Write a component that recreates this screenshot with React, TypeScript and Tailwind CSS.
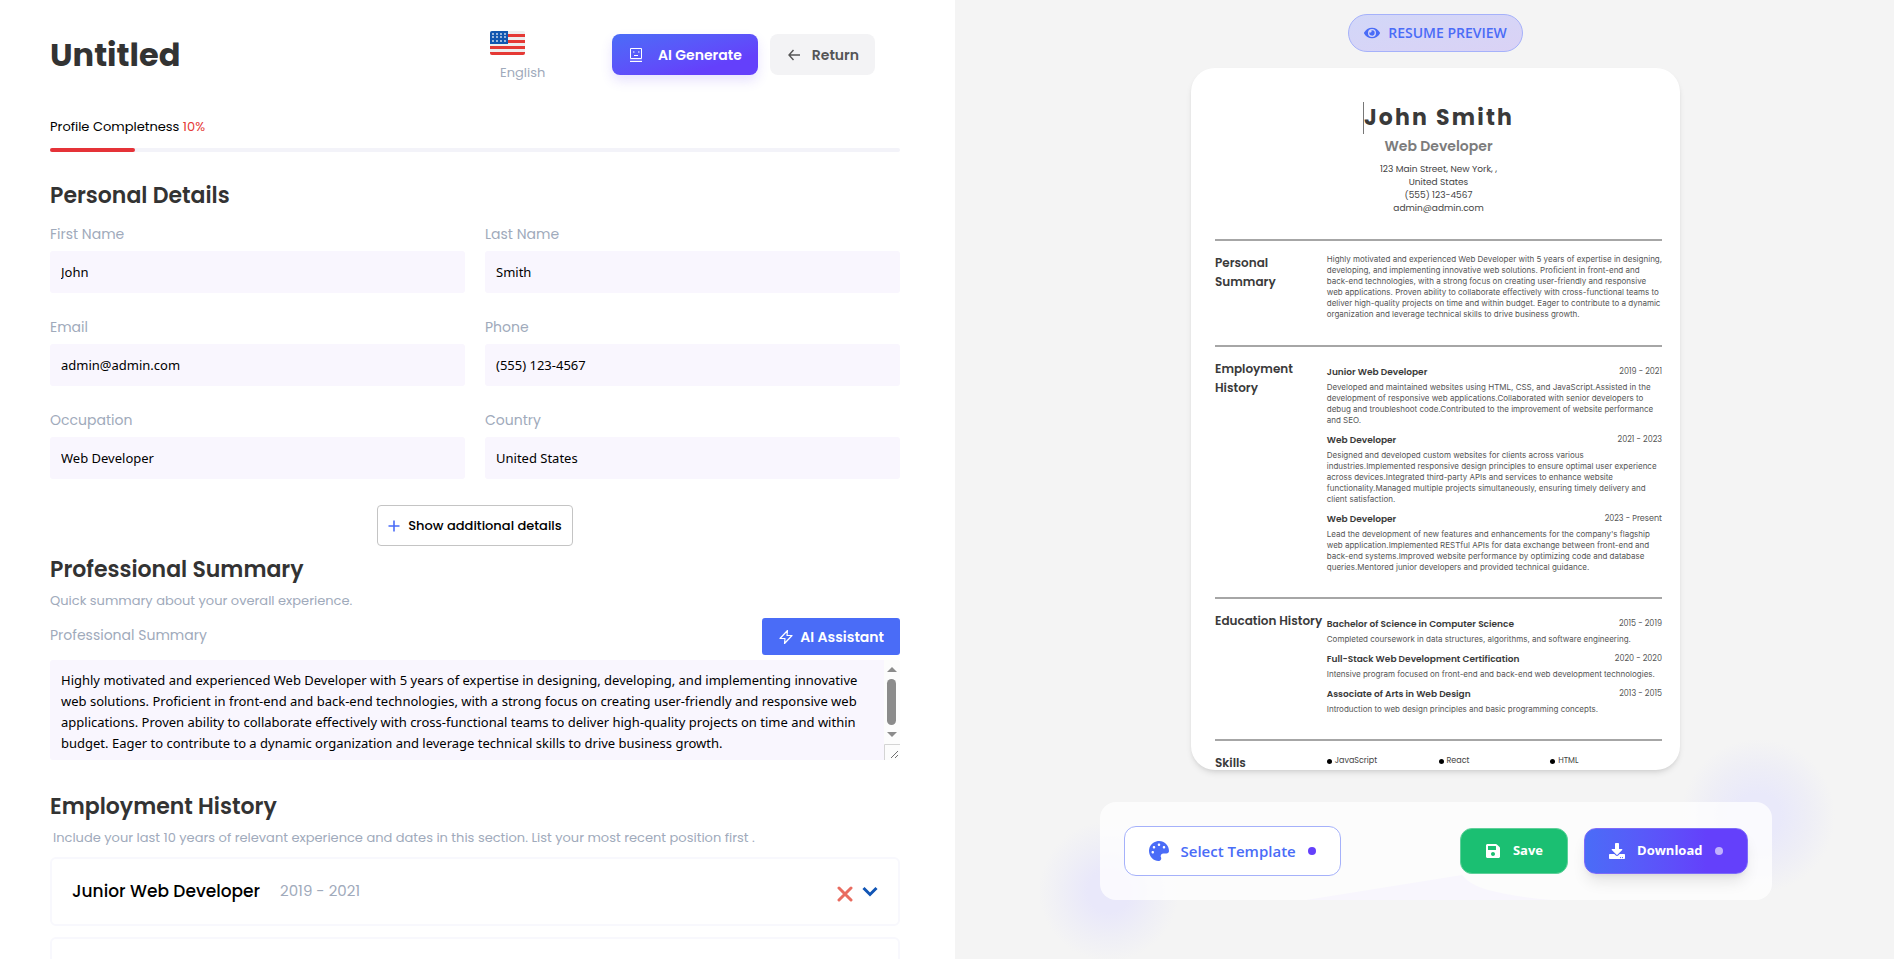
import { useState } from "react"
import { FaDownload, FaEye, FaPalette, FaSave } from "react-icons/fa"

const FIELDS = [
  { id: "firstName", label: "First Name", value: "John" },
  { id: "lastName", label: "Last Name", value: "Smith" },
  { id: "email", label: "Email", value: "admin@admin.com" },
  { id: "phone", label: "Phone", value: "(555) 123-4567" },
  { id: "occupation", label: "Occupation", value: "Web Developer" },
  { id: "country", label: "Country", value: "United States" },
]

const SUMMARY =
  "Highly motivated and experienced Web Developer with 5 years of expertise in designing, developing, and implementing innovative web solutions. Proficient in front-end and back-end technologies, with a strong focus on creating user-friendly and responsive web applications. Proven ability to collaborate effectively with cross-functional teams to deliver high-quality projects on time and within budget. Eager to contribute to a dynamic organization and leverage technical skills to drive business growth."

const PREVIEW_SUMMARY = `Highly motivated and experienced Web Developer with 5 years of expertise in designing,
developing, and implementing innovative web solutions. Proficient in front-end and
back-end technologies, with a strong focus on creating user-friendly and responsive
web applications. Proven ability to collaborate effectively with cross-functional teams to
deliver high-quality projects on time and within budget. Eager to contribute to a dynamic
organization and leverage technical skills to drive business growth.`

const JOBS = [
  {
    title: "Junior Web Developer",
    dates: "2019 - 2021",
    text: `Developed and maintained websites using HTML, CSS, and JavaScript.Assisted in the
development of responsive web applications.Collaborated with senior developers to
debug and troubleshoot code.Contributed to the improvement of website performance
and SEO.`,
  },
  {
    title: "Web Developer",
    dates: "2021 - 2023",
    text: `Designed and developed custom websites for clients across various
industries.Implemented responsive design principles to ensure optimal user experience
across devices.Integrated third-party APIs and services to enhance website
functionality.Managed multiple projects simultaneously, ensuring timely delivery and
client satisfaction.`,
  },
  {
    title: "Web Developer",
    dates: "2023 - Present",
    text: `Lead the development of new features and enhancements for the company's flagship
web application.Implemented RESTful APIs for data exchange between front-end and
back-end systems.Improved website performance by optimizing code and database
queries.Mentored junior developers and provided technical guidance.`,
  },
]

const EDUCATION = [
  {
    title: "Bachelor of Science in Computer Science",
    dates: "2015 - 2019",
    text: "Completed coursework in data structures, algorithms, and software engineering.",
  },
  {
    title: "Full-Stack Web Development Certification",
    dates: "2020 - 2020",
    text: "Intensive program focused on front-end and back-end web development technologies.",
  },
  {
    title: "Associate of Arts in Web Design",
    dates: "2013 - 2015",
    text: "Introduction to web design principles and basic programming concepts.",
  },
]

const SKILLS = ["JavaScript", "React", "HTML"]

type Entry = { title: string; dates: string; text: string }

function Flag() {
  return (
    <svg width="35" height="24" viewBox="0 0 35 24" aria-hidden="true">
      <clipPath id="flag">
        <rect width="35" height="24" rx="2" />
      </clipPath>
      <g clipPath="url(#flag)">
        <rect width="35" height="24" fill="#eeeeee" />
        {[3, 9, 15, 21].map((y) => (
          <rect key={y} y={y} width="35" height="3" fill="#e53935" />
        ))}
        <rect width="18" height="13" fill="#1256b0" />
        {[3, 6, 10].map((y) =>
          [3, 7, 11, 15].map((x) => <circle key={`${x}-${y}`} cx={x} cy={y} r="0.9" fill="#dfe6f2" />)
        )}
      </g>
    </svg>
  )
}

function RobotIcon() {
  return (
    <svg width="12" height="14" viewBox="0 0 12 14" fill="none" stroke="currentColor" aria-hidden="true">
      <path d="M0.5 0.5h11v10h-11zM0 13.5h12" />
      <path d="M3 4h1.5M8 4h1.5M4 7.5h4" />
      <path d="M0 12h12" opacity="0.4" />
    </svg>
  )
}

function ScrollTrack() {
  return (
    <svg width="16" height="100" viewBox="0 0 16 100" aria-hidden="true">
      <rect width="16" height="100" fill="#fcfcfc" />
      <path d="M3 12l5-5 5 5z" fill="#8b8b8b" />
      <rect x="3" y="19" width="9" height="46" rx="4.5" fill="#8b8b8b" />
      <path d="M3 72l5 5 5-5z" fill="#8b8b8b" />
      <path d="M0.5 100V84.5H16" fill="none" stroke="#d4d4d4" />
      <path d="M7 98l7-7M11 98l3-3" stroke="#6f6f6f" />
    </svg>
  )
}

function PreviewSection({ title, children }: { title: string; children: React.ReactNode }) {
  return (
    <section className="flex items-start border-t-2 border-[#a6a6a6] pt-3">
      <h4 className="w-1/4 shrink-0 whitespace-pre text-xs font-semibold leading-[19px] text-[#3a3a3a]">{title}</h4>
      <div className="min-w-0 flex-1">{children}</div>
    </section>
  )
}

function PreviewEntry({ entry }: { entry: Entry }) {
  return (
    <article className="mb-1.5">
      <div className="flex items-center justify-between leading-4">
        <h5 className="text-[9px] font-semibold text-[#3a3a3a]">{entry.title}</h5>
        <span className="text-[8px] text-[#555]">{entry.dates}</span>
      </div>
      <p className="mt-0.5 whitespace-pre font-[Inter,sans-serif] text-[8px] leading-[11px] text-[#555]">{entry.text}</p>
    </article>
  )
}

function ResumePreview() {
  return (
    <div className="h-[702px] w-full max-w-[489px] overflow-hidden rounded-3xl bg-white pl-6 pr-[18px] shadow-md">
      <header className="flex flex-col items-center pb-6 pt-[34px] text-center">
        <h2 className="border-l border-[#777] text-[22px] font-bold leading-8 tracking-widest text-[#3a3a3a]">John Smith</h2>
        <h3 className="text-sm font-semibold leading-6 text-[#7c7c7c]">Web Developer</h3>
        <address className="mt-[5px] whitespace-pre text-[9px] not-italic leading-[13px] text-[#444]">
          {"123 Main Street, New York, ,\nUnited States\n(555) 123-4567\nadmin@admin.com"}
        </address>
      </header>
      <PreviewSection title={"Personal\nSummary"}>
        <p className="pb-[25px] pt-px whitespace-pre font-[Inter,sans-serif] text-[8px] leading-[11px] text-[#555]">
          {PREVIEW_SUMMARY}
        </p>
      </PreviewSection>
      <PreviewSection title={"Employment\nHistory"}>
        <div className="pb-[18px] pt-[5px]">
          {JOBS.map((job) => (
            <PreviewEntry key={job.dates} entry={job} />
          ))}
        </div>
      </PreviewSection>
      <PreviewSection title="Education History">
        <div className="pb-[18px] pt-[5px]">
          {EDUCATION.map((school) => (
            <PreviewEntry key={school.dates} entry={school} />
          ))}
        </div>
      </PreviewSection>
      <PreviewSection title="Skills">
        <ul className="grid grid-cols-3 text-[8px] leading-4 text-[#444]">
          {SKILLS.map((skill) => (
            <li key={skill} className="flex items-center gap-[3px]">
              <span className="size-[5px] rounded-full bg-black" />
              {skill}
            </li>
          ))}
        </ul>
      </PreviewSection>
    </div>
  )
}

export default function App() {
  const [completeness] = useState(10)

  return (
    <div className="grid h-screen grid-cols-[955fr_939fr] overflow-hidden bg-white font-[Poppins,Inter,sans-serif]">
      <main className="overflow-hidden pl-[50px] pr-[55px] pt-[31px]">
        <header className="flex items-start">
          <h1 className="text-[32px] font-bold leading-[48px] text-[#333]">Untitled</h1>
          <button type="button" className="ml-auto mr-8 w-[90px] text-left text-[13px] leading-5 text-[#a0aabb]">
            <Flag />
            <span className="ml-[10px] mt-2 block">English</span>
          </button>
          <div className="mr-[25px] flex gap-3 pt-[3px]">
            <button
              type="button"
              className="flex h-[41px] items-center gap-4 rounded-lg bg-linear-to-br from-[#4a6cf7] to-[#6440fb] to-75% pl-[18px] pr-4 text-sm font-semibold text-white shadow-[0_6px_12px_rgba(100,64,251,0.15)]"
            >
              <RobotIcon />
              AI Generate
            </button>
            <button
              type="button"
              className="flex h-[41px] items-center gap-3 rounded-lg bg-[#f3f3f5] pl-[18px] pr-4 text-sm font-semibold text-[#555]"
            >
              <svg width="12" height="12" viewBox="0 0 12 12" fill="none" stroke="currentColor" strokeWidth="1.4" aria-hidden="true">
                <path d="M12 6H1M5.5 1L1 6l4.5 5" />
              </svg>
              Return
            </button>
          </div>
        </header>

        <div className="mt-[34px] text-[13px] leading-5 text-black">
          Profile Completness <span className="text-[#e53935]">{completeness}%</span>
        </div>
        <div className="mt-[11px] h-1 rounded-full bg-[#f3f3f9]">
          <div className="h-1 rounded-full bg-[#e53238]" style={{ width: `${completeness}%` }} />
        </div>

        <h2 className="mt-7 text-[22px] font-semibold leading-8 text-[#333]">Personal Details</h2>
        <div className="mt-3 grid grid-cols-2 gap-x-5 gap-y-6">
          {FIELDS.map((field) => (
            <div key={field.id}>
              <label htmlFor={field.id} className="block text-sm text-[#a0aabb]">
                {field.label}
              </label>
              <input
                id={field.id}
                defaultValue={field.value}
                className="mt-[7px] block h-[42px] w-full rounded-[3px] bg-[#f9f6fe] px-[11px] font-['Segoe_UI','Noto_Sans',sans-serif] text-[13px] text-black outline-none"
              />
            </div>
          ))}
        </div>

        <button
          type="button"
          className="mx-auto mt-[26px] flex h-[41px] items-center gap-2 rounded border border-[#c4c4c4] px-2.5 text-[13px] font-medium text-black"
        >
          <svg width="12" height="12" viewBox="0 0 12 12" stroke="#4a6cf7" strokeWidth="1.6" aria-hidden="true">
            <path d="M6 0.5v11M0.5 6h11" />
          </svg>
          Show additional details
        </button>

        <h2 className="mt-2 text-[22px] font-semibold leading-8 text-[#333]">Professional Summary</h2>
        <p className="mt-[5px] text-[13px] leading-5 text-[#a0aabb]">Quick summary about your overall experience.</p>
        <div className="mt-[7px] flex items-start justify-between">
          <label htmlFor="summary" className="text-sm leading-[34px] text-[#a0aabb]">
            Professional Summary
          </label>
          <button
            type="button"
            className="flex h-[37px] items-center gap-1.5 rounded-[3px] bg-[#4a6cf7] px-4 text-sm font-semibold text-white"
          >
            <svg width="16" height="16" viewBox="0 0 16 16" fill="none" stroke="currentColor" strokeWidth="1.2" strokeLinejoin="round" aria-hidden="true">
              <path d="M9.5 1.5L2 9.5h5l-0.5 5L14 6.5H9z" />
            </svg>
            AI Assistant
          </button>
        </div>
        <div className="mt-[5px] flex overflow-hidden rounded-[3px] bg-[#f9f6fe]">
          <textarea
            id="summary"
            defaultValue={SUMMARY}
            className="h-[100px] flex-1 resize-none overflow-hidden pb-1 pl-[11px] pr-2 pt-[10px] font-['Segoe_UI','Noto_Sans',sans-serif] text-[13px] leading-[21px] text-black outline-none"
          />
          <ScrollTrack />
        </div>

        <h2 className="mt-[31px] text-[22px] font-semibold leading-8 text-[#333]">Employment History</h2>
        <p className="ml-[3px] mt-[5px] text-[13px] leading-5 text-[#a0aabb]">
          Include your last 10 years of relevant experience and dates in this section. List your most recent position first .
        </p>
        <div className="mt-[9px] flex h-[69px] items-center rounded-md border-2 border-[#f8f8fd] px-5">
          <h3 className="text-[17px] font-medium text-black">Junior Web Developer</h3>
          <span className="ml-5 text-[15px] text-[#a0aabb]">2019 - 2021</span>
          <button type="button" aria-label="Delete" className="ml-auto mt-1">
            <svg width="16" height="16" viewBox="0 0 16 16" stroke="#e96c60" strokeWidth="3" strokeLinecap="round" aria-hidden="true">
              <path d="M2 2l12 12M14 2L2 14" />
            </svg>
          </button>
          <button type="button" aria-label="Expand" className="ml-[9px]">
            <svg width="16" height="16" viewBox="0 0 16 16" fill="none" stroke="#1155b5" strokeWidth="3" aria-hidden="true">
              <path d="M1.5 4L8 10.5 14.5 4" />
            </svg>
          </button>
        </div>
        <div className="mt-[11px] h-[69px] rounded-md border-2 border-[#f8f8fd]" />
      </main>

      <aside className="flex flex-col items-center overflow-hidden bg-[#f4f4f4] pl-[22px] pt-[14px]">
        <div className="flex h-[38px] items-center gap-2 rounded-full border border-[#a5b1fa] bg-linear-to-br from-[#d2d7f8] to-[#dad2f5] px-[15px] font-['Segoe_UI','Open_Sans',sans-serif] text-sm font-semibold text-[#4a6cf7]">
          <FaEye size={16} />
          RESUME PREVIEW
        </div>
        <div className="mt-4 flex w-full justify-center">
          <ResumePreview />
        </div>

        <div className="relative mt-8 w-full max-w-[672px]">
          <div className="absolute -bottom-[66px] -left-[66px] size-[150px] rounded-full bg-[radial-gradient(circle,#e9e8fa_20%,#efeff6_45%,#f4f4f400_66%)]" />
          <div className="absolute -right-[66px] -top-[66px] size-[160px] rounded-full bg-[radial-gradient(circle,#e9e9fa_20%,#eeeef6_45%,#f4f4f400_68%)]" />
          <div className="relative flex h-[98px] items-center overflow-hidden rounded-2xl bg-white/75 px-6">
            <svg className="absolute bottom-0 left-[206px]" width="246" height="26" viewBox="0 0 246 26" fill="#f8f6fd" aria-hidden="true">
              <path d="M0 26L156 1q8 10 26 15 28 7 64 10z" />
            </svg>
            <button
              type="button"
              className="relative flex h-[50px] items-center gap-3 rounded-xl border border-[#a5b1fa] bg-white px-6 font-['Segoe_UI','Open_Sans',sans-serif] text-[15px] font-semibold text-[#4a6cf7]"
            >
              <FaPalette size={20} />
              Select Template
              <span className="size-2 rounded-full bg-[#6440fb]" />
            </button>
            <button
              type="button"
              className="relative ml-auto flex h-[46px] items-center gap-3 rounded-xl border border-[#5fd09a] bg-[#1bbf72] px-6 font-['Segoe_UI','Open_Sans',sans-serif] text-[13px] font-bold text-white"
            >
              <FaSave size={16} />
              Save
            </button>
            <button
              type="button"
              className="relative ml-4 flex h-[46px] items-center gap-3 rounded-xl border border-[#7d6bfa] bg-linear-to-r from-[#4a6cf7] to-[#6440fb] to-75% px-6 font-['Segoe_UI','Open_Sans',sans-serif] text-[13px] font-bold text-white shadow-lg"
            >
              <FaDownload size={16} />
              Download
              <span className="size-2 rounded-full bg-white/60" />
            </button>
          </div>
        </div>
      </aside>
    </div>
  )
}
